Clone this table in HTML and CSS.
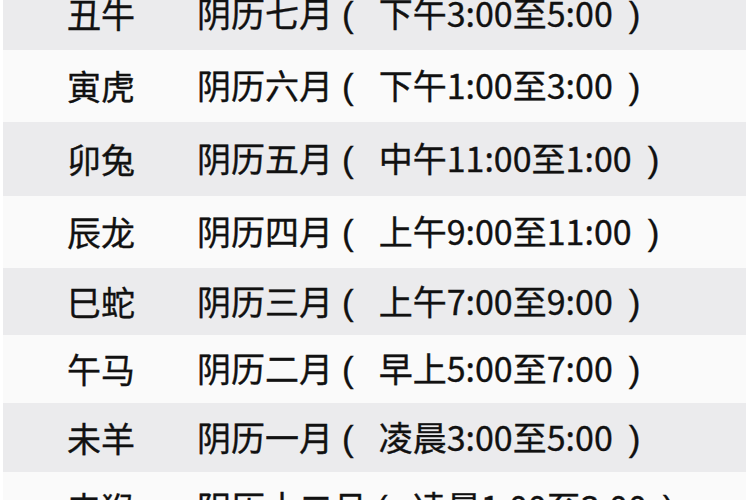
FILE: index.html
```html
<!DOCTYPE html>
<html lang="zh-CN">
<head>
<meta charset="utf-8">
<title>生肖月份时辰</title>
<link rel="stylesheet" href="styles.css">
</head>
<body>
<div class="table">
  <div class="row shade"><span class="animal">丑牛</span><span class="month">阴历七月<span class="po">(</span>下午3:00至5:00<span class="pc">)</span></span></div>
  <div class="row"><span class="animal">寅虎</span><span class="month">阴历六月<span class="po">(</span>下午1:00至3:00<span class="pc">)</span></span></div>
  <div class="row shade"><span class="animal">卯兔</span><span class="month">阴历五月<span class="po">(</span>中午11:00至1:00<span class="pc">)</span></span></div>
  <div class="row"><span class="animal">辰龙</span><span class="month">阴历四月<span class="po">(</span>上午9:00至11:00<span class="pc">)</span></span></div>
  <div class="row shade"><span class="animal">巳蛇</span><span class="month">阴历三月<span class="po">(</span>上午7:00至9:00<span class="pc">)</span></span></div>
  <div class="row"><span class="animal">午马</span><span class="month">阴历二月<span class="po">(</span>早上5:00至7:00<span class="pc">)</span></span></div>
  <div class="row shade"><span class="animal">未羊</span><span class="month">阴历一月<span class="po">(</span>凌晨3:00至5:00<span class="pc">)</span></span></div>
  <div class="row"><span class="animal">申猴</span><span class="month">阴历十二月<span class="po">(</span>凌晨1:00至3:00<span class="pc">)</span></span></div>
</div>
</body>
</html>
```
FILE: styles.css
```css
html, body {
  margin: 0;
  padding: 0;
  background: #ffffff;
  overflow: hidden;
}
body {
  width: 750px;
  height: 500px;
}
.table {
  margin: -22px 4px 0 3px;
  display: flex;
  flex-direction: column;
}
.row {
  display: grid;
  grid-template-columns: 130px 1fr;
  align-items: center;
  padding-left: 64px;
  height: 70px;
  background: #fafafa;
  font-family: "Noto Sans CJK SC", "Noto Sans", sans-serif;
  font-size: 34px;
  line-height: 1;
  color: #111111;
  -webkit-text-stroke: 0.35px #111111;
}
.row.shade {
  background: #ebebed;
}
.row:nth-child(1) { height: 72px; }
.row:nth-child(2) { height: 72px; }
.row:nth-child(3) { height: 74px; }
.row:nth-child(4) { height: 72px; }
.row:nth-child(5) { height: 67px; }
.row:nth-child(6) { height: 68px; }
.row:nth-child(7) { height: 69px; }
.row:nth-child(8) { height: 72px; }
.animal, .month {
  white-space: nowrap;
}
.po, .pc {
  font-family: "Liberation Sans", Arial, sans-serif;
  font-size: 35px;
}
.po {
  margin: 0 25px 0 9px;
}
.pc {
  margin-left: 16px;
}
```
